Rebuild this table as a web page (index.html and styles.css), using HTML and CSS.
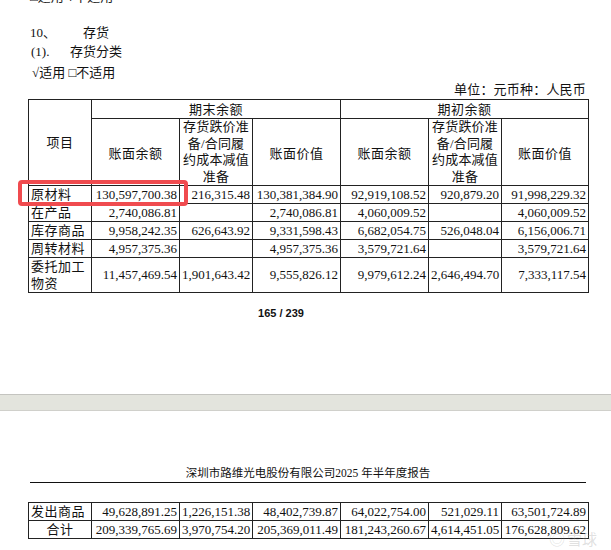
FILE: index.html
```html
<!DOCTYPE html>
<html lang="zh">
<head>
<meta charset="utf-8">
<title>存货</title>
<link rel="stylesheet" href="styles.css">
</head>
<body>
<div class="page page-top">
  <div class="line cut">□适用 √不适用</div>
  <div class="line h1"><span class="num">10、</span><span class="ttl">存货</span></div>
  <div class="line h2"><span class="num2">(1).</span><span class="ttl2">存货分类</span></div>
  <div class="line opt">√适用 □不适用</div>
  <div class="line unit">单位：元币种：人民币</div>
  <div class="table-wrap">
    <table class="tbl">
      <colgroup>
        <col class="c1"><col class="c2"><col class="c3"><col class="c4"><col class="c5"><col class="c6"><col class="c7">
      </colgroup>
      <tr class="hr1">
        <th rowspan="2">项目</th>
        <th colspan="3">期末余额</th>
        <th colspan="3">期初余额</th>
      </tr>
      <tr class="hr2">
        <th>账面余额</th>
        <th class="ml">存货跌价准<br>备/合同履<br>约成本减值<br>准备</th>
        <th>账面价值</th>
        <th>账面余额</th>
        <th class="ml">存货跌价准<br>备/合同履<br>约成本减值<br>准备</th>
        <th>账面价值</th>
      </tr>
      <tr class="dr"><td class="nm">原材料</td><td>130,597,700.38</td><td>216,315.48</td><td>130,381,384.90</td><td>92,919,108.52</td><td>920,879.20</td><td>91,998,229.32</td></tr>
      <tr class="dr"><td class="nm">在产品</td><td>2,740,086.81</td><td></td><td>2,740,086.81</td><td>4,060,009.52</td><td></td><td>4,060,009.52</td></tr>
      <tr class="dr"><td class="nm">库存商品</td><td>9,958,242.35</td><td>626,643.92</td><td>9,331,598.43</td><td>6,682,054.75</td><td>526,048.04</td><td>6,156,006.71</td></tr>
      <tr class="dr"><td class="nm">周转材料</td><td>4,957,375.36</td><td></td><td>4,957,375.36</td><td>3,579,721.64</td><td></td><td>3,579,721.64</td></tr>
      <tr class="dr tall"><td class="nm ml">委托加工<br>物资</td><td>11,457,469.54</td><td>1,901,643.42</td><td>9,555,826.12</td><td>9,979,612.24</td><td>2,646,494.70</td><td>7,333,117.54</td></tr>
    </table>
    <div class="highlight"></div>
  </div>
  <div class="pageno">165 / 239</div>
</div>
<div class="band"></div>
<div class="page page-bottom">
  <div class="report">深圳市路维光电股份有限公司2025 年半年度报告</div>
  <table class="tbl tbl2">
    <colgroup>
      <col class="c1"><col class="c2"><col class="c3"><col class="c4"><col class="c5"><col class="c6"><col class="c7">
    </colgroup>
    <tr class="dr"><td class="nm">发出商品</td><td>49,628,891.25</td><td>1,226,151.38</td><td>48,402,739.87</td><td>64,022,754.00</td><td>521,029.11</td><td>63,501,724.89</td></tr>
    <tr class="dr"><td class="nm ctr">合计</td><td>209,339,765.69</td><td>3,970,754.20</td><td>205,369,011.49</td><td>181,243,260.67</td><td>4,614,451.05</td><td>176,628,809.62</td></tr>
  </table>
  <div class="watermark"><span class="wm-logo">◎</span>雪球</div>
</div>
</body>
</html>
```

FILE: styles.css
```css
* { box-sizing: border-box; }
html, body { margin: 0; padding: 0; background: #fff; }
body {
  font-family: "Liberation Serif", "Noto Sans CJK SC", serif;
  color: #111;
  font-size: 13px;
  overflow: hidden;
  width: 611px;
  height: 550px;
}
.page { position: relative; }
.page-top { height: 394px; padding: 0 23px 0 28px; overflow: hidden; }

.line { line-height: 18px; height: 18px; white-space: nowrap; }
.cut { margin-top: -12px; padding-left: 2px; color: #222; }
.h1 { margin-top: 18px; padding-left: 2px; }
.h1 .num { display: inline-block; width: 53px; }
.h2 { margin-top: 1px; padding-left: 3px; }
.h2 .num2 { display: inline-block; width: 39px; }
.opt { margin-top: 3px; padding-left: 4px; }
.unit { margin-top: -1px; text-align: right; padding-right: 2px; letter-spacing: 0.2px; }

.table-wrap { position: relative; }
.tbl {
  border-collapse: collapse;
  table-layout: fixed;
  width: 560px;
  border: 1.5px solid #222;
}
.c1 { width: 63px; }
.c2 { width: 88px; }
.c3 { width: 73px; }
.c4 { width: 88px; }
.c5 { width: 88px; }
.c6 { width: 73px; }
.c7 { width: 87px; }

.tbl th, .tbl td {
  border: 1px solid #222;
  padding: 0 2px;
  font-weight: normal;
  white-space: nowrap;
  overflow: hidden;
}
.tbl th { text-align: center; letter-spacing: 0.5px; }
.tbl th.ml { line-height: 16.5px; padding: 0; letter-spacing: 0.2px; }
.hr1 { height: 19px; }
.hr1 th { line-height: 17px; }
.hr2 { height: 67px; }
.dr { height: 18px; }
.dr td { line-height: 16px; text-align: right; }
.dr td.nm { text-align: left; padding-left: 2px; letter-spacing: 0.5px; }
.dr td.nm.ml { line-height: 17px; }
.dr td.ctr { text-align: center; }
.tall { height: 35px; }

.highlight {
  position: absolute;
  left: -10px;
  top: 81px;
  width: 170px;
  height: 26px;
  border: 4px solid #f04b4f;
  border-radius: 4px;
  pointer-events: none;
}

.pageno {
  margin-top: 13px;
  font-family: "Liberation Sans", Arial, sans-serif;
  font-weight: bold;
  font-size: 11px;
  line-height: 14px;
  text-align: center;
  padding-right: 54px;
  color: #111;
}

.band {
  height: 17px;
  background: #e3e4dd;
  border-top: 1px solid #c4c4c0;
  border-bottom: 1px solid #d0d0cb;
}

.page-bottom { padding: 54px 23px 0 28px; height: 139px; }
.report {
  margin: 0 2px 0 2px;
  text-align: center;
  font-size: 11.5px;
  line-height: 16px;
  padding-bottom: 1px;
  border-bottom: 1.5px solid #111;
}
.tbl2 { margin-top: 19px; }

.watermark {
  position: absolute;
  right: 14px;
  bottom: 2px;
  font-family: "Noto Sans CJK SC", sans-serif;
  font-size: 15px;
  line-height: 18px;
  color: rgba(150, 150, 150, 0.3);
  white-space: nowrap;
  pointer-events: none;
}
.wm-logo { font-size: 16px; margin-right: 2px; }
```
